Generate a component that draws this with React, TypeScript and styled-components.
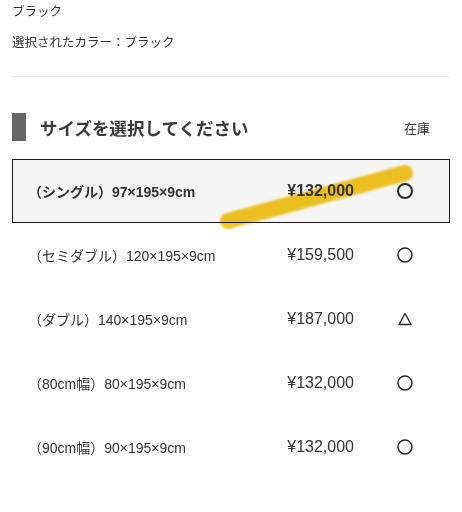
import React from 'react';
import styled, { createGlobalStyle } from 'styled-components';

type Stock = 'circle' | 'triangle';

interface SizeOption {
  label: string;
  price: string;
  stock: Stock;
}

const sizes: SizeOption[] = [
  { label: '（シングル）97×195×9cm', price: '¥132,000', stock: 'circle' },
  { label: '（セミダブル）120×195×9cm', price: '¥159,500', stock: 'circle' },
  { label: '（ダブル）140×195×9cm', price: '¥187,000', stock: 'triangle' },
  { label: '（80cm幅）80×195×9cm', price: '¥132,000', stock: 'circle' },
  { label: '（90cm幅）90×195×9cm', price: '¥132,000', stock: 'circle' },
];

const GlobalStyle = createGlobalStyle`
  html, body {
    margin: 0;
    padding: 0;
    background: #ffffff;
  }
  body {
    font-family: "Liberation Sans", "Noto Sans CJK JP", sans-serif;
    color: #333333;
  }
`;

const Page = styled.div`
  padding: 4px 12px 0 12px;
`;

const ColorName = styled.div`
  font-size: 12.5px;
  line-height: 16px;
  color: #333;
`;

const SelectedColor = styled.div`
  margin-top: 15px;
  font-size: 12.5px;
  line-height: 16px;
  color: #333;
`;

const Divider = styled.hr`
  margin: 25px 0 0 0;
  border: none;
  border-top: 1px solid #e6e6e6;
`;

const HeadingRow = styled.div`
  display: flex;
  align-items: center;
  margin-top: 36px;
  height: 28px;
`;

const HeadingBar = styled.span`
  width: 14px;
  height: 28px;
  background: #666666;
  flex-shrink: 0;
`;

const HeadingText = styled.h2`
  margin: 0 0 0 14px;
  flex: 1;
  font-family: "Noto Sans CJK JP", sans-serif;
  font-size: 17.5px;
  font-weight: 700;
  color: #3a3a3a;
`;

const StockHeader = styled.span`
  width: 50px;
  text-align: center;
  font-family: "Noto Sans CJK JP", sans-serif;
  font-size: 13px;
  color: #333;
  margin-right: 8px;
`;

const Table = styled.div`
  position: relative;
  margin-top: 18px;
`;

const Row = styled.div<{ $selected?: boolean }>`
  display: grid;
  grid-template-columns: 1fr 120px 88px;
  align-items: center;
  height: 64px;
  box-sizing: border-box;
  padding-left: 15px;
  border: ${(p) => (p.$selected ? '1.5px solid #1a1a1a' : '1.5px solid transparent')};
  background: ${(p) => (p.$selected ? '#f5f5f3' : 'transparent')};
  font-weight: ${(p) => (p.$selected ? 700 : 400)};
`;

const Label = styled.span`
  font-size: 14px;
  color: #333;
  white-space: nowrap;
`;

const Price = styled.span`
  font-size: 16px;
  color: #333;
  text-align: right;
  padding-right: 7px;
  position: relative;
  z-index: 1;
`;

const StockCell = styled.span`
  display: flex;
  justify-content: center;
`;

const Highlight = styled.svg`
  position: absolute;
  left: 0;
  top: 0;
  width: 450px;
  height: 100px;
  pointer-events: none;
  mix-blend-mode: multiply;
`;

const StockMark: React.FC<{ kind: Stock; bold?: boolean }> = ({ kind, bold }) =>
  kind === 'circle' ? (
    <svg width="18" height="18" viewBox="0 0 18 18">
      <circle cx="9" cy="9" r="7" fill="none" stroke="#2a2a2a" strokeWidth={bold ? 2 : 1.5} />
    </svg>
  ) : (
    <svg width="16" height="16" viewBox="0 0 16 16">
      <path d="M8 2.5 L14 13.5 L2 13.5 Z" fill="none" stroke="#2a2a2a" strokeWidth="1.4" strokeLinejoin="round" />
    </svg>
  );

export default function App() {
  return (
    <>
      <GlobalStyle />
      <Page>
        <ColorName>ブラック</ColorName>
        <SelectedColor>選択されたカラー：ブラック</SelectedColor>
        <Divider />
        <HeadingRow>
          <HeadingBar />
          <HeadingText>サイズを選択してください</HeadingText>
          <StockHeader>在庫</StockHeader>
        </HeadingRow>
        <Table>
          {sizes.map((s, i) => (
            <Row key={i} $selected={i === 0}>
              <Label>{s.label}</Label>
              <Price>{s.price}</Price>
              <StockCell>
                <StockMark kind={s.stock} bold={i === 0} />
              </StockCell>
            </Row>
          ))}
          <Highlight viewBox="0 0 450 100">
            <defs>
              <filter id="soft" x="-10%" y="-50%" width="120%" height="200%">
                <feGaussianBlur stdDeviation="1.3" />
              </filter>
            </defs>
            <line
              x1="216"
              y1="62"
              x2="393"
              y2="14"
              stroke="#f5c518"
              strokeWidth="16"
              strokeLinecap="round"
              opacity="0.95"
              filter="url(#soft)"
            />
          </Highlight>
        </Table>
      </Page>
    </>
  );
}
